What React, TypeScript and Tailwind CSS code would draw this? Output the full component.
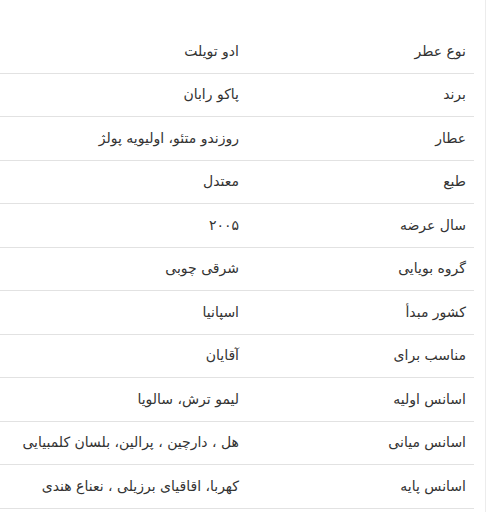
import React from "react";

const rows: [string, string][] = [
  ["نوع عطر", "ادو تویلت"],
  ["برند", "پاکو رابان"],
  ["عطار", "روزندو متئو، اولیویه پولژ"],
  ["طبع", "معتدل"],
  ["سال عرضه", "۲۰۰۵"],
  ["گروه بویایی", "شرقی چوبی"],
  ["کشور مبدأ", "اسپانیا"],
  ["مناسب برای", "آقایان"],
  ["اسانس اولیه", "لیمو ترش، سالویا"],
  ["اسانس میانی", "هل ، دارچین ، پرالین، بلسان کلمبیایی"],
  ["اسانس پایه", "کهربا، اقاقیای برزیلی ، نعناع هندی"],
];

const App: React.FC = () => {
  return (
    <div className="h-[512px] w-[498px] overflow-hidden bg-white">
      <div
        dir="rtl"
        className="h-full w-[486px] border-r border-[#ececec] pr-[11px] pt-[30px] text-[14px] text-[#333]"
        style={{ fontFamily: '"DejaVu Sans", sans-serif' }}
      >
        {rows.map(([label, value]) => (
          <div
            key={label}
            className="flex h-[43.5px] items-center border-b border-[#e2e2e2]"
          >
            <div className="w-[227px] shrink-0 pr-[8px]">{label}</div>
            <div className="flex-1 pr-[8px]">{value}</div>
          </div>
        ))}
      </div>
    </div>
  );
};

export default App;
